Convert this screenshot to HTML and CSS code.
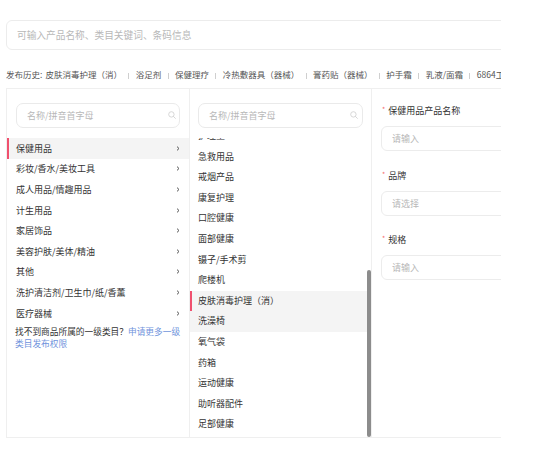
FILE: index.html
```html
<!DOCTYPE html>
<html lang="zh-CN">
<head>
<meta charset="utf-8">
<title>发布商品 - 选择类目</title>
<link rel="stylesheet" href="styles.css">
</head>
<body>
<div class="page">
  <div class="search">
    <input class="search-input" type="text" placeholder="可输入产品名称、类目关键词、条码信息">
  </div>

  <div class="history">
    <span class="history-label">发布历史:</span><span class="h-item">皮肤消毒护理（消）</span><span class="h-item">浴足剂</span><span class="h-item">保健理疗</span><span class="h-item">冷热敷器具（器械）</span><span class="h-item">膏药贴（器械）</span><span class="h-item">护手霜</span><span class="h-item">乳液/面霜</span><span class="h-item">6864工具</span>
  </div>

  <div class="panel">
    <div class="col col-1">
      <div class="col-search">
        <input class="col-input" type="text" placeholder="名称/拼音首字母">
        <svg class="search-icon" width="8" height="8" viewBox="0 0 8 8"><circle cx="3.4" cy="3.4" r="2.7" fill="none" stroke="#d2d2d2" stroke-width="0.9"/><path d="M5.4 5.4 L7.4 7.4" stroke="#d2d2d2" stroke-width="0.9" stroke-linecap="round"/></svg>
      </div>
      <ul class="cat-list">
        <li class="cat-item is-active"><span>保健用品</span><svg class="chev" width="4" height="5" viewBox="0 0 4 5"><path d="M1 0.6 L3 2.5 L1 4.4" fill="none" stroke="#555" stroke-width="1"/></svg></li>
        <li class="cat-item"><span>彩妆/香水/美妆工具</span><svg class="chev" width="4" height="5" viewBox="0 0 4 5"><path d="M1 0.6 L3 2.5 L1 4.4" fill="none" stroke="#555" stroke-width="1"/></svg></li>
        <li class="cat-item"><span>成人用品/情趣用品</span><svg class="chev" width="4" height="5" viewBox="0 0 4 5"><path d="M1 0.6 L3 2.5 L1 4.4" fill="none" stroke="#555" stroke-width="1"/></svg></li>
        <li class="cat-item"><span>计生用品</span><svg class="chev" width="4" height="5" viewBox="0 0 4 5"><path d="M1 0.6 L3 2.5 L1 4.4" fill="none" stroke="#555" stroke-width="1"/></svg></li>
        <li class="cat-item"><span>家居饰品</span><svg class="chev" width="4" height="5" viewBox="0 0 4 5"><path d="M1 0.6 L3 2.5 L1 4.4" fill="none" stroke="#555" stroke-width="1"/></svg></li>
        <li class="cat-item"><span>美容护肤/美体/精油</span><svg class="chev" width="4" height="5" viewBox="0 0 4 5"><path d="M1 0.6 L3 2.5 L1 4.4" fill="none" stroke="#555" stroke-width="1"/></svg></li>
        <li class="cat-item"><span>其他</span><svg class="chev" width="4" height="5" viewBox="0 0 4 5"><path d="M1 0.6 L3 2.5 L1 4.4" fill="none" stroke="#555" stroke-width="1"/></svg></li>
        <li class="cat-item"><span>洗护清洁剂/卫生巾/纸/香薰</span><svg class="chev" width="4" height="5" viewBox="0 0 4 5"><path d="M1 0.6 L3 2.5 L1 4.4" fill="none" stroke="#555" stroke-width="1"/></svg></li>
        <li class="cat-item"><span>医疗器械</span><svg class="chev" width="4" height="5" viewBox="0 0 4 5"><path d="M1 0.6 L3 2.5 L1 4.4" fill="none" stroke="#555" stroke-width="1"/></svg></li>
      </ul>
      <p class="note">找不到商品所属的一级类目？<a class="note-link" href="#">申请更多一级类目发布权限</a></p>
    </div>

    <div class="col col-2">
      <div class="col-search">
        <input class="col-input" type="text" placeholder="名称/拼音首字母">
        <svg class="search-icon" width="8" height="8" viewBox="0 0 8 8"><circle cx="3.4" cy="3.4" r="2.7" fill="none" stroke="#d2d2d2" stroke-width="0.9"/><path d="M5.4 5.4 L7.4 7.4" stroke="#d2d2d2" stroke-width="0.9" stroke-linecap="round"/></svg>
      </div>
      <div class="sub-viewport">
        <ul class="sub-list">
          <li class="sub-item">护理垫</li>
          <li class="sub-item">急救用品</li>
          <li class="sub-item">戒烟产品</li>
          <li class="sub-item">康复护理</li>
          <li class="sub-item">口腔健康</li>
          <li class="sub-item">面部健康</li>
          <li class="sub-item">镊子/手术剪</li>
          <li class="sub-item">爬楼机</li>
          <li class="sub-item is-active">皮肤消毒护理（消）</li>
          <li class="sub-item is-hover">洗澡椅</li>
          <li class="sub-item">氧气袋</li>
          <li class="sub-item">药箱</li>
          <li class="sub-item">运动健康</li>
          <li class="sub-item">助听器配件</li>
          <li class="sub-item">足部健康</li>
        </ul>
        <div class="thumb"></div>
      </div>
    </div>

    <div class="col col-3">
      <div class="field">
        <div class="field-label"><span class="req">*</span>保健用品产品名称</div>
        <input class="field-input" type="text" placeholder="请输入">
      </div>
      <div class="field">
        <div class="field-label"><span class="req">*</span>品牌</div>
        <input class="field-input" type="text" placeholder="请选择">
      </div>
      <div class="field">
        <div class="field-label"><span class="req">*</span>规格</div>
        <input class="field-input" type="text" placeholder="请输入">
      </div>
    </div>
  </div>
</div>
</body>
</html>
```

FILE: styles.css
```css
* {
  box-sizing: border-box;
}

body {
  margin: 0;
  background: #ffffff;
  font-family: "Noto Sans CJK SC", "Noto Sans", sans-serif;
  color: #333333;
}

.page {
  width: 495px;
  margin-left: 6px;
  padding-top: 20px;
  overflow: hidden;
}

input {
  font-family: inherit;
  outline: none;
  background: #ffffff;
  color: #333333;
}

input::placeholder {
  color: #b8b8b8;
}

.search-input {
  display: block;
  width: 560px;
  height: 30px;
  border: 1px solid #ececec;
  border-radius: 6px;
  padding: 0 0 0 10px;
  font-size: 9.7px;
}

.history {
  margin-top: 17px;
  height: 14px;
  line-height: 14px;
  font-size: 8.5px;
  color: #555555;
  white-space: nowrap;
  overflow: hidden;
}

.history-label {
  margin-right: 3px;
}

.h-item + .h-item::before {
  content: "";
  display: inline-block;
  width: 1px;
  height: 6px;
  background: #cfcfcf;
  margin: 0 6.4px;
  vertical-align: middle;
}

.panel {
  display: flex;
  width: 560px;
  height: 350px;
  margin-top: 7px;
  border: 1px solid #efefef;
}

.col {
  display: flex;
  flex-direction: column;
  border-right: 1px solid #efefef;
  flex-shrink: 0;
}

.col-1 {
  width: 183px;
}

.col-2 {
  width: 182px;
}

.col-3 {
  flex: 1 1 auto;
  min-width: 0;
  border-right: none;
  padding: 15px 0 0 9px;
}

.col-search {
  position: relative;
  padding: 14px 9px 0;
}

.col-2 .col-search {
  padding: 14px 8px 0;
}

.col-input {
  display: block;
  width: 100%;
  height: 25px;
  border: 1px solid #eaeaea;
  border-radius: 7px;
  padding: 0 0 0 10px;
  font-size: 9px;
}

.search-icon {
  position: absolute;
  right: 13px;
  top: 22px;
}

.cat-list,
.sub-list {
  list-style: none;
  margin: 0;
  padding: 0;
}

.cat-list {
  margin-top: 10px;
}

.cat-item {
  display: flex;
  align-items: center;
  justify-content: space-between;
  height: 20.6px;
  padding: 0 9px 0 9px;
  font-size: 9px;
  color: #333333;
  white-space: nowrap;
}

.cat-item.is-active,
.sub-item.is-active {
  background: #f4f4f4;
  box-shadow: inset 2px 0 0 #f0506e;
}

.chev {
  display: block;
}

.note {
  margin: 3px 0 0;
  padding: 0 8px;
  font-size: 8.7px;
  line-height: 11.5px;
  color: #333333;
}

.note-link {
  color: #6f93dc;
  text-decoration: none;
}

.sub-viewport {
  position: relative;
  flex: 1;
  margin-top: 10px;
  overflow: hidden;
}

.sub-list {
  margin-top: -12px;
}

.sub-item {
  height: 20.6px;
  line-height: 20.6px;
  padding: 0 8px;
  font-size: 9px;
  color: #333333;
  white-space: nowrap;
}

.sub-item.is-hover {
  background: #f4f4f4;
}

.thumb {
  position: absolute;
  right: 0;
  top: 132px;
  bottom: 0;
  width: 4.5px;
  border-radius: 2px;
  background: #8c8c8c;
}

.field {
  margin-bottom: 17.5px;
}

.field-label {
  height: 14px;
  line-height: 14px;
  font-size: 9px;
  color: #333333;
  margin-bottom: 8px;
  white-space: nowrap;
}

.req {
  color: #f56c6c;
  font-size: 7px;
  margin: 0 3px 0 1px;
  vertical-align: top;
  line-height: 11px;
}

.field-input {
  display: block;
  width: 200px;
  height: 25px;
  border: 1px solid #ececec;
  border-radius: 6px;
  padding: 0 0 0 10px;
  font-size: 9px;
}
```
